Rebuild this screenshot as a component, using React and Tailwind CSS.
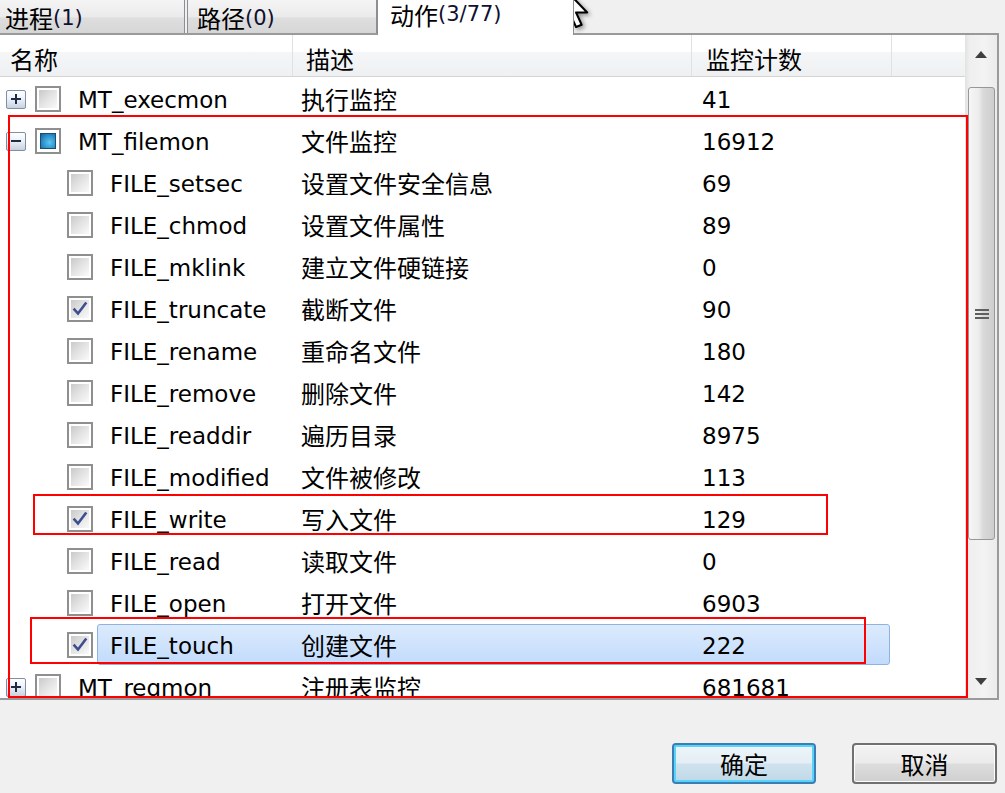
import React from 'react';

const latin = "font-['DejaVu_Sans','Noto_Sans_CJK_SC',sans-serif] text-[23px] leading-none text-black pt-[3px]";
const cjk = "font-['Noto_Sans_CJK_SC','DejaVu_Sans',sans-serif] text-[24px] leading-none text-black";

const files = [
  { name: 'FILE_setsec', desc: '设置文件安全信息', count: '69' },
  { name: 'FILE_chmod', desc: '设置文件属性', count: '89' },
  { name: 'FILE_mklink', desc: '建立文件硬链接', count: '0' },
  { name: 'FILE_truncate', desc: '截断文件', count: '90', checked: true },
  { name: 'FILE_rename', desc: '重命名文件', count: '180' },
  { name: 'FILE_remove', desc: '删除文件', count: '142' },
  { name: 'FILE_readdir', desc: '遍历目录', count: '8975' },
  { name: 'FILE_modified', desc: '文件被修改', count: '113' },
  { name: 'FILE_write', desc: '写入文件', count: '129', checked: true },
  { name: 'FILE_read', desc: '读取文件', count: '0' },
  { name: 'FILE_open', desc: '打开文件', count: '6903' },
  { name: 'FILE_touch', desc: '创建文件', count: '222', checked: true, selected: true },
];

const Check = ({ state }) => (
  <div className="w-[26px] h-[26px] shrink-0 border-2 border-[#8f8f8f] bg-white p-[2px]">
    {state === 'partial' ? (
      <div className="w-full h-full p-[1px] bg-white">
        <div className="w-full h-full border border-[#1a4c78] bg-[radial-gradient(circle_at_60%_60%,#5cc6ef_0%,#2e93cc_55%,#16609a_100%)]" />
      </div>
    ) : (
      <div className="w-full h-full flex items-center justify-center bg-[linear-gradient(135deg,#c9c9c9_0%,#e4e4e4_50%,#fafafa_100%)]">
        {state === 'checked' && (
          <svg className="w-[16px] h-[16px]" viewBox="0 0 16 16" fill="none">
            <path d="M2.5 8.5L6 12.5L13.5 2.5" stroke="#3d4f8e" strokeWidth="2.6" strokeLinecap="square" />
          </svg>
        )}
      </div>
    )}
  </div>
);

const Expander = ({ open }) => (
  <div className="w-[20px] h-[19px] shrink-0 flex items-center justify-center rounded-[2px] border border-[#7d8fa9] bg-[linear-gradient(to_bottom,#ffffff_0%,#eef2f7_45%,#c7d1df_100%)]">
    <svg className="w-[12px] h-[12px]" viewBox="0 0 12 12" fill="none">
      <path d="M1 6H11" stroke="#1e2c48" strokeWidth="2" />
      {!open && <path d="M6 1V11" stroke="#1e2c48" strokeWidth="2" />}
    </svg>
  </div>
);

const GroupRow = ({ name, desc, count, open, state }) => (
  <div className="flex items-center h-[42px] shrink-0">
    <div className="w-[293px] flex items-center pl-[6px]">
      <Expander open={open} />
      <div className="ml-[9px]">
        <Check state={state} />
      </div>
      <span className={`ml-[17px] ${latin}`}>{name}</span>
    </div>
    <div className={`w-[399px] pl-[8px] ${cjk}`}>{desc}</div>
    <div className={`pl-[10px] ${latin}`}>{count}</div>
  </div>
);

const FileRow = ({ name, desc, count, checked, selected }) => (
  <div className="flex h-[42px] shrink-0">
    <div className="w-[97px] pl-[67px] flex items-center">
      <Check state={checked ? 'checked' : 'none'} />
    </div>
    <div
      className={
        selected
          ? 'w-[793px] h-[41px] flex items-center rounded-[3px] border border-[#8db2e3] bg-[linear-gradient(to_bottom,#dcebfc_0%,#cfe3fc_50%,#c1dbfc_100%)]'
          : 'w-[793px] h-[41px] flex items-center border border-transparent'
      }
    >
      <div className={`w-[195px] pl-[12px] ${latin}`}>{name}</div>
      <div className={`w-[399px] pl-[8px] ${cjk}`}>{desc}</div>
      <div className={`pl-[10px] ${latin}`}>{count}</div>
    </div>
  </div>
);

const Tab = ({ label, num, className }) => (
  <div className={className}>
    <span className={cjk}>{label}</span>
    <span className="font-['DejaVu_Sans',sans-serif] text-[21px] leading-none text-[#101030]">{num}</span>
  </div>
);

export default function App() {
  return (
    <div className="relative w-[1005px] h-[793px] overflow-hidden bg-[#f0f0f0] flex flex-col">
      {/* tabs */}
      <div className="h-[33px] flex items-end shrink-0">
        <Tab
          label="进程"
          num="(1)"
          className="w-[185px] h-[33px] flex items-center pl-[5px] pt-[3px] border-r border-[#8c8e94] bg-[linear-gradient(to_bottom,#f4f4f4_0%,#ebebeb_50%,#dedede_55%,#d6d6d6_100%)]"
        />
        <Tab
          label="路径"
          num="(0)"
          className="ml-[2px] w-[190px] h-[33px] flex items-center pl-[9px] pt-[3px] border-l border-r border-[#8c8e94] bg-[linear-gradient(to_bottom,#f4f4f4_0%,#ebebeb_50%,#dedede_55%,#d6d6d6_100%)]"
        />
        <Tab
          label="动作"
          num="(3/77)"
          className="relative z-10 -mb-[2px] w-[197px] h-[35px] flex items-center pb-[6px] pl-[12px] bg-white border-l border-r border-[#8c8e94]"
        />
      </div>

      {/* list panel */}
      <div className="w-[999px] h-[667px] shrink-0 flex border-t-2 border-b-2 border-r-2 border-[#999a9c] bg-white">
        <div className="w-[965px] flex flex-col overflow-hidden">
          <div className="h-[42px] shrink-0 flex border-b border-[#d5d5d5] bg-[linear-gradient(to_bottom,#ffffff_0%,#ffffff_42%,#f5f6f8_42%,#eef0f2_100%)]">
            <div className={`w-[293px] flex items-center pl-[10px] pt-[6px] border-r border-[#dfe1e4] ${cjk}`}>名称</div>
            <div className={`w-[399px] flex items-center pl-[13px] pt-[6px] border-r border-[#dfe1e4] ${cjk}`}>描述</div>
            <div className={`w-[200px] flex items-center pl-[14px] pt-[6px] border-r border-[#dfe1e4] ${cjk}`}>监控计数</div>
            <div className="flex-1" />
          </div>
          <div className="flex flex-col pt-[1px]">
            <GroupRow name="MT_execmon" desc="执行监控" count="41" open={false} state="none" />
            <GroupRow name="MT_filemon" desc="文件监控" count="16912" open state="partial" />
            {files.map((f) => (
              <FileRow key={f.name} {...f} />
            ))}
            <GroupRow name="MT_regmon" desc="注册表监控" count="681681" open={false} state="none" />
          </div>
        </div>

        {/* scrollbar */}
        <div className="w-[32px] flex flex-col bg-[linear-gradient(to_right,#e2e2e2_0%,#efefef_15%,#f3f3f3_60%,#ebebeb_100%)]">
          <div className="h-[36px] flex items-center justify-center pt-[2px]">
            <svg width="12" height="7" viewBox="0 0 12 7">
              <path d="M6 0L12 7H0Z" fill="#3f3f3f" />
            </svg>
          </div>
          <div className="flex-1 flex flex-col">
            <div className="mt-[16px] ml-[3px] mr-[2px] h-[453px] flex items-center justify-center rounded-[3px] border border-[#979797] bg-[linear-gradient(to_right,#f6f6f6_0%,#ececec_40%,#dadada_55%,#cdcdcd_100%)]">
              <div className="flex flex-col gap-[2px]">
                <div className="w-[14px] h-[2px] bg-[#5f5f5f]" />
                <div className="w-[14px] h-[2px] bg-[#5f5f5f]" />
                <div className="w-[14px] h-[2px] bg-[#5f5f5f]" />
              </div>
            </div>
          </div>
          <div className="h-[34px] flex items-center justify-center">
            <svg width="12" height="7" viewBox="0 0 12 7">
              <path d="M0 0H12L6 7Z" fill="#3f3f3f" />
            </svg>
          </div>
        </div>
      </div>

      {/* buttons */}
      <div className="flex justify-end gap-[36px] pr-[8px] pt-[43px]">
        <button className="w-[144px] h-[41px] flex items-center justify-center rounded-[4px] border-2 border-[#3a7eb3] shadow-[inset_0_0_0_2px_#58d3fa] bg-[linear-gradient(to_bottom,#eef5f9_0%,#e4eef4_48%,#cfe3ee_52%,#bfd8e7_100%)]">
          <span className={cjk}>确定</span>
        </button>
        <button className="w-[145px] h-[41px] flex items-center justify-center rounded-[4px] border-2 border-[#707070] shadow-[inset_0_0_0_1px_#fcfcfc] bg-[linear-gradient(to_bottom,#f3f3f3_0%,#ebebeb_48%,#dddddd_52%,#cfcfcf_100%)]">
          <span className={cjk}>取消</span>
        </button>
      </div>

      {/* annotation boxes */}
      <div className="absolute left-[8px] top-[115px] w-[960px] h-[583px] border-2 border-[#ff0000] pointer-events-none" />
      <div className="absolute left-[33px] top-[494px] w-[795px] h-[41px] border-2 border-[#ff0000] pointer-events-none" />
      <div className="absolute left-[30px] top-[617px] w-[836px] h-[47px] border-2 border-[#ff0000] pointer-events-none" />

      {/* mouse pointer */}
      <svg
        className="absolute left-[561px] top-[-15px] drop-shadow-[2px_2px_2px_rgba(0,0,0,0.4)]"
        width="29"
        height="45"
        viewBox="0 0 26 40"
      >
        <path d="M1.5 1.5V33.5L8.5 26.5L13.5 37.5L18.5 35.5L13.5 24.5H23.5Z" fill="#ffffff" stroke="#000000" strokeWidth="1.8" strokeLinejoin="round" />
      </svg>
    </div>
  );
}
